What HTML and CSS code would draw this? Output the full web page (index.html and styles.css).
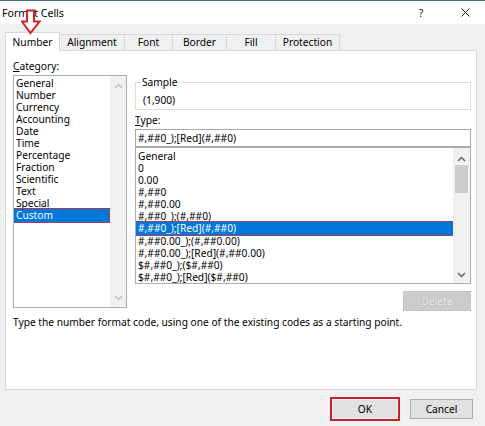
FILE: index.html
```html
<!DOCTYPE html>
<html>
<head>
<meta charset="utf-8">
<link rel="stylesheet" href="styles.css">
</head>
<body>
<div class="window">
  <div class="titlebar">
    <span class="title">Format Cells</span>
    <span class="help">?</span>
    <svg class="close" width="9" height="9" viewBox="0 0 9 9"><path d="M0.5 0.5L8.5 8.5M8.5 0.5L0.5 8.5"/></svg>
  </div>
  <div class="tabs">
    <div class="tab active w-number">Number</div>
    <div class="tab w-align">Alignment</div>
    <div class="tab w-font">Font</div>
    <div class="tab w-border">Border</div>
    <div class="tab w-fill">Fill</div>
    <div class="tab w-prot">Protection</div>
  </div>
  <svg class="arrow" width="20" height="26" viewBox="0 0 20 26"><path d="M6 1.5H13V12.5H18.5L9.5 24L1 12.5H6Z"/></svg>
  <div class="panel">
    <div class="main">
      <div class="left">
        <div class="label"><u>C</u>ategory:</div>
        <div class="listbox cat">
          <div class="items">
            <div class="item">General</div>
            <div class="item">Number</div>
            <div class="item">Currency</div>
            <div class="item">Accounting</div>
            <div class="item">Date</div>
            <div class="item">Time</div>
            <div class="item">Percentage</div>
            <div class="item">Fraction</div>
            <div class="item">Scientific</div>
            <div class="item">Text</div>
            <div class="item">Special</div>
            <div class="item sel">Custom</div>
          </div>
          <div class="scroll dim">
            <svg class="chev" width="9" height="6" viewBox="0 0 9 6"><path d="M1 5L4.5 1.5L8 5"/></svg>
            <svg class="chev" width="9" height="6" viewBox="0 0 9 6"><path d="M1 1L4.5 4.5L8 1"/></svg>
          </div>
        </div>
      </div>
      <div class="right">
        <fieldset class="sample">
          <legend>Sample</legend>
          <div class="sample-val">(1,900)</div>
        </fieldset>
        <div class="label type-label"><u>T</u>ype:</div>
        <div class="input">#,##0_);[Red](#,##0)</div>
        <div class="listbox types">
          <div class="items">
            <div class="item">General</div>
            <div class="item">0</div>
            <div class="item">0.00</div>
            <div class="item">#,##0</div>
            <div class="item">#,##0.00</div>
            <div class="item">#,##0_);(#,##0)</div>
            <div class="item sel">#,##0_);[Red](#,##0)</div>
            <div class="item">#,##0.00_);(#,##0.00)</div>
            <div class="item">#,##0.00_);[Red](#,##0.00)</div>
            <div class="item">$#,##0_);($#,##0)</div>
            <div class="item">$#,##0_);[Red]($#,##0)</div>
          </div>
          <div class="scroll">
            <svg class="chev" width="9" height="6" viewBox="0 0 9 6"><path d="M1 5L4.5 1.5L8 5"/></svg>
            <div class="thumb"></div>
            <div class="spacer"></div>
            <svg class="chev" width="9" height="6" viewBox="0 0 9 6"><path d="M1 1L4.5 4.5L8 1"/></svg>
          </div>
        </div>
        <div class="delete-row"><button class="btn delete">Delete</button></div>
      </div>
    </div>
    <p class="hint">Type the number format code, using one of the existing codes as a starting point.</p>
  </div>
  <div class="buttons">
    <button class="btn ok">OK</button>
    <button class="btn cancel">Cancel</button>
  </div>
</div>
</body>
</html>
```
FILE: styles.css
```css
* { box-sizing: border-box; }
body {
  margin: 0;
  width: 485px;
  height: 426px;
  overflow: hidden;
  background: #f0f0f0;
  font-family: "Noto Sans", "Open Sans", sans-serif;
  font-size: 10.2px;
  color: #000;
}
.window {
  position: relative;
  width: 485px;
  height: 426px;
  background: #f0f0f0;
}
.titlebar {
  height: 24px;
  background: #fff;
  border-top: 1px solid #4a7390;
  display: flex;
  align-items: center;
  padding-left: 2px;
}
.title { flex: 1; line-height: 14px; font-size: 10.6px; }
.help {
  width: 10px;
  text-align: center;
  margin-right: 35px;
  line-height: 14px;
  color: #222;
  font-size: 10.6px;
}
.close { margin-right: 15px; }
.close path { stroke: #222; stroke-width: 1; fill: none; }

.tabs {
  height: 26px;
  display: flex;
  align-items: flex-end;
  padding-left: 5px;
}
.tab {
  height: 16px;
  line-height: 14px;
  text-align: center;
  border: 1px solid #d9d9d9;
  border-bottom: none;
  background: #f0f0f0;
  margin-left: -1px;
}
.tab.active {
  height: 19px;
  margin-bottom: -1px;
  margin-left: 0;
  padding-top: 2px;
  background: #fff;
  position: relative;
  z-index: 1;
}
.w-number { width: 55px; }
.w-align { width: 66px; }
.w-font { width: 49px; }
.w-border { width: 55px; }
.w-fill { width: 50px; }
.w-prot { width: 65px; }

.arrow {
  position: absolute;
  left: 21px;
  top: 9px;
  z-index: 2;
}
.arrow path { fill: #fff; stroke: #d1232a; stroke-width: 2; stroke-linejoin: miter; }

.panel {
  height: 340px;
  width: 472px;
  margin-left: 5px;
  background: #fff;
  border: 1px solid #d9d9d9;
  padding: 8px 5px 0 7px;
}
.main { display: flex; gap: 8px; }
.left { width: 114px; }
.right { width: 336px; padding-top: 16px; }
.label { line-height: 14px; }

.listbox {
  display: flex;
  border: 1px solid #abadb3;
  background: #fff;
  overflow: hidden;
}
.cat { margin-top: 2px; height: 233px; }
.items { flex: 1; padding-top: 1px; }
.item {
  line-height: 12px;
  height: 12px;
  padding-left: 2px;
  white-space: nowrap;
}
.item.sel {
  background: #0078d7;
  color: #fff;
  outline: 1px solid #9c3f5c;
  height: 13px;
}
.cat .item.sel { margin-right: 1px; }
.scroll {
  width: 16px;
  background: #f0f0f0;
  display: flex;
  flex-direction: column;
  align-items: center;
  justify-content: space-between;
  padding: 7px 0 6px;
}
.chev path { fill: none; stroke: #606060; stroke-width: 1.4; }
.dim .chev path { stroke: #c0c0c0; }

.sample {
  margin: 0;
  height: 35px;
  border: 1px solid #dcdcdc;
  padding: 4px 7px 2px 7px;
}
.sample legend {
  padding: 0 1px;
  margin-left: -2px;
  line-height: 14px;
}
.sample-val { line-height: 14px; }
.type-label { margin-top: 3px; }
.input {
  margin-top: 2px;
  height: 18px;
  line-height: 16px;
  border: 1px solid #a6a6a6;
  padding-left: 2px;
}
.types { height: 137px; }
.types .items { padding-top: 2px; }
.types .scroll { width: 17px; padding: 8px 0 5px; justify-content: flex-start; }
.thumb {
  width: 13px;
  height: 28px;
  background: #cdcdcd;
  margin-top: 3px;
}
.spacer { flex: 1; }

.delete-row {
  margin-top: 7px;
  display: flex;
  justify-content: flex-end;
}
.btn {
  font-family: inherit;
  font-size: 10.2px;
  color: #000;
  background: #e1e1e1;
  border: 1px solid #adadad;
  padding: 0;
  line-height: 16px;
}
.delete {
  width: 68px;
  height: 20px;
  background: #cccccc;
  border-color: #c4c4c4;
  color: #eeeeee;
  text-shadow: 0 0 1px #9a9a9a;
}
.hint {
  margin: 4px 0 0;
  line-height: 14px;
  font-size: 10.2px;
}

.buttons {
  margin-top: 7px;
  display: flex;
  justify-content: flex-end;
  align-items: center;
  gap: 10px;
  padding-right: 12px;
}
.ok {
  width: 70px;
  height: 24px;
  border: 2px solid #c8202f;
  box-shadow: inset 0 0 0 1px #f2f2f2;
}
.cancel {
  width: 63px;
  height: 20px;
}
```
